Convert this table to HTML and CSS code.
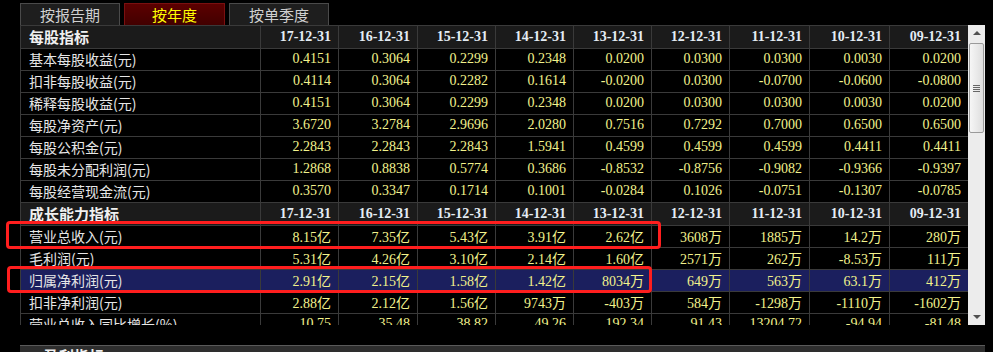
FILE: index.html
```html
<!DOCTYPE html>
<html lang="zh">
<head>
    <meta charset="UTF-8">
    <title>财务指标</title>
    <link rel="stylesheet" href="styles.css">
</head>
<body>

<div class="page">
    <div class="tabs">
        <div class="tab">按报告期</div>
        <div class="tab active">按年度</div>
        <div class="tab">按单季度</div>
    </div>

    <div class="panel">
        <div class="grid-wrap">
            <table class="grid">
                <colgroup>
                    <col class="c-label">
                    <col class="c78"><col class="c79"><col class="c78"><col class="c78"><col class="c78">
                    <col class="c78"><col class="c80"><col class="c80"><col class="c79">
                </colgroup>
                <!-- 每股指标 -->
                <tr class="head">
                    <th>每股指标</th>
                    <th>17-12-31</th><th>16-12-31</th><th>15-12-31</th><th>14-12-31</th><th>13-12-31</th>
                    <th>12-12-31</th><th>11-12-31</th><th>10-12-31</th><th>09-12-31</th>
                </tr>
                <tr><td>基本每股收益(元)</td><td>0.4151</td><td>0.3064</td><td>0.2299</td><td>0.2348</td><td>0.0200</td><td>0.0300</td><td>0.0300</td><td>0.0030</td><td>0.0200</td></tr>
                <tr><td>扣非每股收益(元)</td><td>0.4114</td><td>0.3064</td><td>0.2282</td><td>0.1614</td><td>-0.0200</td><td>0.0300</td><td>-0.0700</td><td>-0.0600</td><td>-0.0800</td></tr>
                <tr><td>稀释每股收益(元)</td><td>0.4151</td><td>0.3064</td><td>0.2299</td><td>0.2348</td><td>0.0200</td><td>0.0300</td><td>0.0300</td><td>0.0030</td><td>0.0200</td></tr>
                <tr><td>每股净资产(元)</td><td>3.6720</td><td>3.2784</td><td>2.9696</td><td>2.0280</td><td>0.7516</td><td>0.7292</td><td>0.7000</td><td>0.6500</td><td>0.6500</td></tr>
                <tr><td>每股公积金(元)</td><td>2.2843</td><td>2.2843</td><td>2.2843</td><td>1.5941</td><td>0.4599</td><td>0.4599</td><td>0.4599</td><td>0.4411</td><td>0.4411</td></tr>
                <tr><td>每股未分配利润(元)</td><td>1.2868</td><td>0.8838</td><td>0.5774</td><td>0.3686</td><td>-0.8532</td><td>-0.8756</td><td>-0.9082</td><td>-0.9366</td><td>-0.9397</td></tr>
                <tr><td>每股经营现金流(元)</td><td>0.3570</td><td>0.3347</td><td>0.1714</td><td>0.1001</td><td>-0.0284</td><td>0.1026</td><td>-0.0751</td><td>-0.1307</td><td>-0.0785</td></tr>

                <!-- 成长能力指标 -->
                <tr class="head">
                    <th>成长能力指标</th>
                    <th>17-12-31</th><th>16-12-31</th><th>15-12-31</th><th>14-12-31</th><th>13-12-31</th>
                    <th>12-12-31</th><th>11-12-31</th><th>10-12-31</th><th>09-12-31</th>
                </tr>
                <tr><td>营业总收入(元)</td><td>8.15亿</td><td>7.35亿</td><td>5.43亿</td><td>3.91亿</td><td>2.62亿</td><td>3608万</td><td>1885万</td><td>14.2万</td><td>280万</td></tr>
                <tr><td>毛利润(元)</td><td>5.31亿</td><td>4.26亿</td><td>3.10亿</td><td>2.14亿</td><td>1.60亿</td><td>2571万</td><td>262万</td><td>-8.53万</td><td>111万</td></tr>
                <tr class="selected"><td>归属净利润(元)</td><td>2.91亿</td><td>2.15亿</td><td>1.58亿</td><td>1.42亿</td><td>8034万</td><td>649万</td><td>563万</td><td>63.1万</td><td>412万</td></tr>
                <tr><td>扣非净利润(元)</td><td>2.88亿</td><td>2.12亿</td><td>1.56亿</td><td>9743万</td><td>-403万</td><td>584万</td><td>-1298万</td><td>-1110万</td><td>-1602万</td></tr>
                <tr><td>营业总收入同比增长(%)</td><td>10.75</td><td>35.48</td><td>38.82</td><td>49.26</td><td>192.34</td><td>91.43</td><td>13204.72</td><td>-94.94</td><td>-81.48</td></tr>
            </table>
        </div>

        <div class="scrollbar">
            <div class="arrow up"></div>
            <div class="track">
                <div class="thumb"><span class="grip"></span></div>
            </div>
            <div class="arrow down"></div>
        </div>
    </div>

    <div class="next-panel">
        <span class="next-title">盈利指标</span>
    </div>

    <!-- 标注框 -->
    <div class="mark mark-revenue"></div>
    <div class="mark mark-profit"></div>
</div>

</body>
</html>
```

FILE: styles.css
```css
body {
    margin: 0;
    background: #000;
    font-family: "Noto Sans CJK SC", "Liberation Sans", sans-serif;
    overflow: hidden;
}
.page {
    position: relative;
    height: 352px;
    padding: 3px 0 0 20px;
    box-sizing: border-box;
    overflow: hidden;
}
.tabs {
    display: flex;
    gap: 4px;
    height: 22px;
}
.tab {
    width: 100px;
    box-sizing: border-box;
    border: 1px solid #4a4a4a;
    border-bottom: none;
    background: #1e1e1e;
    color: #d0d0d0;
    font-size: 15px;
    line-height: 21px;
    text-align: center;
}
.tab.active {
    width: 101px;
    background: linear-gradient(#5c0000, #420000);
    border-color: #7a1010;
    color: #ffff00;
}
.panel {
    display: flex;
    width: 965px;
    height: 300px;
}
.grid-wrap {
    width: 948px;
    height: 300px;
    overflow: hidden;
}
.grid {
    border-collapse: collapse;
    table-layout: fixed;
    width: 948px;
}
.c-label { width: 240px; }
.c78 { width: 78px; }
.c79 { width: 79px; }
.c80 { width: 80px; }
.grid th,
.grid td {
    height: 20px;
    padding: 0 7px 1px 0;
    border: 1px solid #3a3a3a;
    text-align: right;
    white-space: nowrap;
    overflow: hidden;
}
.grid td {
    font-family: "Liberation Serif", "Noto Sans CJK SC", serif;
    font-size: 14px;
    color: #f2f28c;
}
.grid th {
    background: #1b1b1b;
    font-family: "Liberation Serif", serif;
    font-size: 14px;
    font-weight: bold;
    color: #e4ecf4;
}
.grid th:first-child,
.grid td:first-child {
    text-align: left;
    padding: 0 0 1px 8px;
    font-family: "Noto Sans CJK SC", sans-serif;
    font-size: 14px;
    color: #e6e6e6;
}
.grid th:first-child {
    font-weight: bold;
    font-size: 15px;
    color: #f0f0f0;
}
.grid tr.selected td {
    background: #1b1f5e;
}
.scrollbar {
    width: 17px;
    display: flex;
    flex-direction: column;
    background: #ececec;
}
.arrow {
    height: 17px;
    position: relative;
}
.arrow::after {
    content: "";
    position: absolute;
    left: 5px;
    width: 0;
    height: 0;
    border-left: 4px solid transparent;
    border-right: 4px solid transparent;
}
.arrow.up::after {
    top: 6px;
    border-bottom: 4px solid #505050;
}
.arrow.down::after {
    top: 7px;
    border-top: 4px solid #505050;
}
.track {
    flex: 1;
    padding-top: 1px;
}
.thumb {
    height: 88px;
    margin: 0 1px;
    border: 1px solid #9a9a9a;
    border-radius: 2px;
    background: linear-gradient(to right, #f6f6f6, #dedede);
    display: flex;
    align-items: center;
    justify-content: center;
}
.grip {
    width: 7px;
    height: 7px;
    background: repeating-linear-gradient(#666 0, #666 1px, transparent 1px, transparent 2px);
}
.next-panel {
    margin-top: 20px;
    width: 965px;
    height: 7px;
    background: #2e2e2e;
    border-top: 1px solid #5a5a5a;
    box-sizing: border-box;
    padding-left: 24px;
    overflow: hidden;
}
.next-title {
    display: block;
    font-size: 15px;
    font-weight: bold;
    color: #f0f0f0;
    line-height: 16px;
    margin-top: 2px;
}
.mark {
    position: absolute;
    border: 3px solid #ff1e1e;
    border-radius: 4px;
    box-sizing: border-box;
}
.mark-revenue {
    left: 6px;
    top: 221px;
    width: 655px;
    height: 28px;
}
.mark-profit {
    left: 7px;
    top: 266px;
    width: 645px;
    height: 27px;
}
```
